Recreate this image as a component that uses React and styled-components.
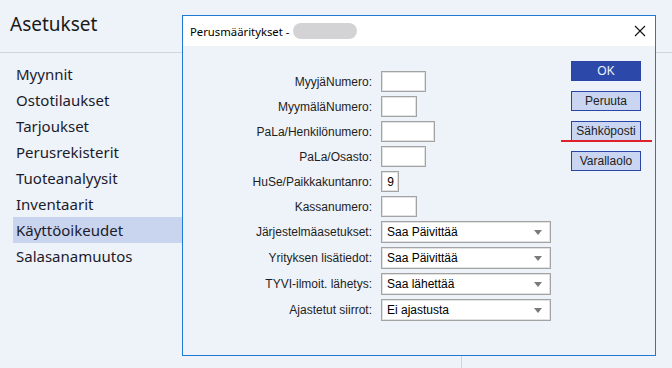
import React from "react";
import styled, { createGlobalStyle } from "styled-components";

const Global = createGlobalStyle`
  html, body { margin: 0; padding: 0; }
  body { background: #eef2f9; width: 672px; height: 368px; overflow: hidden; }
  * { box-sizing: border-box; }
`;

const Page = styled.div`
  position: relative;
  width: 672px;
  height: 368px;
  background: #eef2f9;
  font-family: "Noto Sans", "Open Sans", sans-serif;
  color: #1b1b1b;
  display: flex;
  flex-direction: column;
`;

const Header = styled.div`
  height: 53px;
  border-bottom: 1px solid #d3d5da;
  display: flex;
  align-items: center;
  padding-left: 10px;
  padding-bottom: 4px;
  font-size: 19px;
  color: #1a1a1a;
`;

const Main = styled.div`
  flex: 1;
  display: flex;
`;

const Sidebar = styled.nav`
  width: 230px;
  padding-top: 8px;
  display: flex;
  flex-direction: column;
`;

const NavItem = styled.div`
  height: 26px;
  margin-left: 13px;
  padding-left: 3px;
  display: flex;
  align-items: center;
  font-size: 15px;
  color: #1b1b2b;
  background: ${(p) => (p.$active ? "#c9d4ee" : "transparent")};
`;

const ContentPane = styled.div`
  width: 232px;
  border-right: 1px solid #d0d2d8;
`;

const Dialog = styled.div`
  position: absolute;
  left: 182px;
  top: 15px;
  width: 474px;
  height: 341px;
  border: 1px solid #1f7ad4;
  background: #eef2f9;
  display: flex;
  flex-direction: column;
`;

const TitleBar = styled.div`
  height: 30px;
  background: #ffffff;
  display: flex;
  align-items: center;
  padding-left: 7px;
  padding-right: 9px;
  font-family: "Noto Sans", sans-serif;
  font-size: 11.3px;
  color: #000;
  white-space: pre;
`;

const Blur = styled.span`
  display: inline-block;
  width: 64px;
  height: 16px;
  border-radius: 8px;
  background: #d3d3d5;
  margin-left: 1px;
`;

const Close = styled.div`
  margin-left: auto;
  width: 12px;
  height: 12px;
  display: flex;
`;

const Body = styled.div`
  flex: 1;
  display: flex;
  font-family: "Liberation Sans", Arial, sans-serif;
  font-size: 12px;
`;

const Form = styled.div`
  flex: 1;
  padding-top: 25px;
  display: grid;
  grid-template-columns: 189px auto;
  column-gap: 9px;
  row-gap: 4px;
  align-content: start;
  align-items: center;
`;

const Label = styled.div`
  text-align: right;
  color: #1e1e1e;
  white-space: nowrap;
`;

const Field = styled.div`
  width: ${(p) => p.$w}px;
  height: 21px;
  background: #fff;
  border: 1px solid #a3a3a3;
  box-shadow: inset 0 0 0 1px #e2e2e2;
  text-align: right;
  padding: 2px 4px 0 0;
  font-size: 12px;
  line-height: 17px;
  color: #000;
`;

const Select = styled.div`
  width: 170px;
  height: 22px;
  background: #fff;
  border: 1px solid #a3a3a3;
  box-shadow: inset 0 0 0 1px #e2e2e2;
  display: flex;
  align-items: center;
  padding: 0 8px 0 5px;
  font-size: 12px;
  color: #000;
`;

const Arrow = styled.span`
  margin-left: auto;
  width: 0;
  height: 0;
  border-left: 4px solid transparent;
  border-right: 4px solid transparent;
  border-top: 5px solid #7a7a7a;
`;

const Buttons = styled.div`
  width: 84px;
  padding-top: 15px;
  padding-right: 14px;
  display: flex;
  flex-direction: column;
  gap: 10px;
`;

const Btn = styled.div`
  position: relative;
  width: 70px;
  height: 20px;
  display: flex;
  align-items: center;
  justify-content: center;
  font-size: 12px;
  border: 1px solid #2a45a6;
  background: ${(p) => (p.$primary ? "#2c48a9" : "#cad6f1")};
  color: ${(p) => (p.$primary ? "#eaf1ff" : "#222")};
  ${(p) =>
    p.$marked &&
    `
    &::after {
      content: "";
      position: absolute;
      left: -11px;
      right: -12px;
      bottom: -2px;
      height: 2px;
      background: #e0202a;
    }
  `}
`;

const textFields = [
  ["MyyjäNumero:", 45, ""],
  ["MyymäläNumero:", 36, ""],
  ["PaLa/Henkilönumero:", 54, ""],
  ["PaLa/Osasto:", 45, ""],
  ["HuSe/Paikkakuntanro:", 18, "9"],
  ["Kassanumero:", 36, ""],
];

const selects = [
  ["Järjestelmäasetukset:", "Saa Päivittää"],
  ["Yrityksen lisätiedot:", "Saa Päivittää"],
  ["TYVI-ilmoit. lähetys:", "Saa lähettää"],
  ["Ajastetut siirrot:", "Ei ajastusta"],
];

const menu = [
  "Myynnit",
  "Ostotilaukset",
  "Tarjoukset",
  "Perusrekisterit",
  "Tuoteanalyysit",
  "Inventaarit",
  "Käyttöoikeudet",
  "Salasanamuutos",
];

export default function App() {
  return (
    <Page>
      <Global />
      <Header>Asetukset</Header>
      <Main>
        <Sidebar>
          {menu.map((m) => (
            <NavItem key={m} $active={m === "Käyttöoikeudet"}>
              {m}
            </NavItem>
          ))}
        </Sidebar>
        <ContentPane />
      </Main>
      <Dialog>
        <TitleBar>
          {"Perusmääritykset - "}
          <Blur />
          <Close>
            <svg width="12" height="12" viewBox="0 0 12 12">
              <path d="M1 1 L11 11 M11 1 L1 11" stroke="#111" strokeWidth="1.1" />
            </svg>
          </Close>
        </TitleBar>
        <Body>
          <Form>
            {textFields.map(([l, w, v]) => (
              <React.Fragment key={l}>
                <Label>{l}</Label>
                <Field $w={w}>{v}</Field>
              </React.Fragment>
            ))}
            {selects.map(([l, v]) => (
              <React.Fragment key={l}>
                <Label>{l}</Label>
                <Select>
                  {v}
                  <Arrow />
                </Select>
              </React.Fragment>
            ))}
          </Form>
          <Buttons>
            <Btn $primary>OK</Btn>
            <Btn>Peruuta</Btn>
            <Btn $marked>Sähköposti</Btn>
            <Btn>Varallaolo</Btn>
          </Buttons>
        </Body>
      </Dialog>
    </Page>
  );
}
